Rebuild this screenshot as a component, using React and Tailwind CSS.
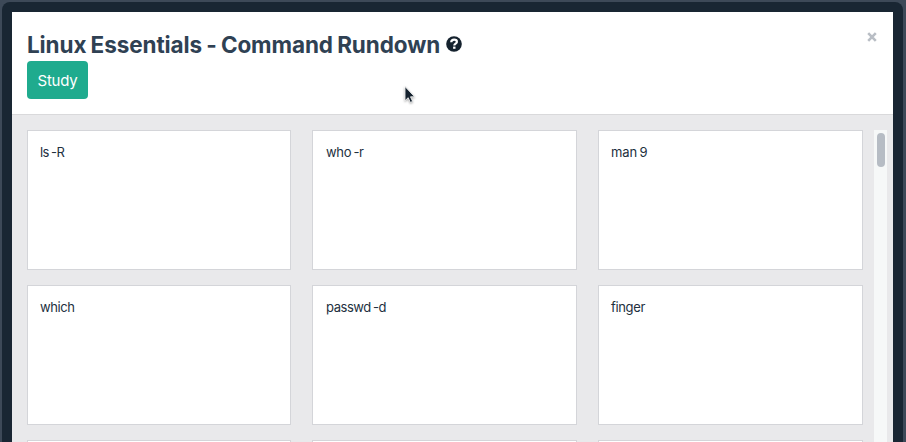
const cards = [
  { text: 'ls -R', look: 'pl-[12px] tracking-[-0.55px]' },
  { text: 'who -r', look: 'pl-[13px] tracking-[-0.35px]' },
  { text: 'man 9', look: 'pl-[12px] tracking-[-0.1px]' },
  { text: 'which', look: 'pl-[12px] tracking-[-0.4px]' },
  { text: 'passwd -d', look: 'pl-[13px] tracking-[-0.45px]' },
  { text: 'finger', look: 'pl-[12px] tracking-[-0.35px]' },
  { text: '', look: '' },
  { text: '', look: '' },
  { text: '', look: '' },
];

function HelpIcon() {
  return (
    <svg className="mt-[24px] h-4 w-4 shrink-0" viewBox="0 0 16 16">
      <circle cx="8" cy="8" r="7.8" fill="#15222e" />
      <path d="M5.2 6.3C5.3 4.6 6.4 3.7 8.1 3.7c1.7 0 2.8.9 2.8 2.2 0 1.7-2.6 1.8-2.6 3.6" fill="none" stroke="#fff" strokeWidth="2.2" />
      <rect x="7.1" y="10.6" width="2.4" height="2.2" fill="#fff" />
    </svg>
  );
}

function Cursor() {
  return (
    <svg className="absolute left-[403px] top-[85px] h-[22px] w-[16px] drop-shadow-[0_1px_1px_rgba(0,0,0,0.35)]" viewBox="0 0 16 22">
      <path d="M2 1.5v14.2l3.2-3 2.1 4.7 2.3-1-2.1-4.6h4.1z" fill="#15222e" stroke="#fff" strokeWidth=".8" />
    </svg>
  );
}

export default function App() {
  return (
    <div className="relative h-[442px] w-[906px] overflow-hidden bg-[#3d4958] px-[2px] pt-[2px] font-['Inter','Liberation_Sans',sans-serif]">
      <div className="h-[460px] w-[901px] rounded-[8px] bg-[#192633] px-[10px] pt-[10px]">
        <div className="flex h-[450px] w-[881px] flex-col bg-[#e9e9eb]">
          <header className="flex h-[103px] shrink-0 justify-between border-b border-[#d9d9db] bg-white pl-[15px] pr-[16px]">
            <div>
              <div className="flex h-[49px]">
                <h1 className="mt-[18px] w-[419px] whitespace-nowrap text-[22.5px] font-bold leading-[30px] tracking-[-0.1px] text-[#2f4153] [word-spacing:-1px]">Linux Essentials - Command Rundown</h1>
                <HelpIcon />
              </div>
              <button className="block h-[38px] w-[61px] rounded-[4px] bg-[#1fab8e] text-[15px] leading-[40px] tracking-[-0.2px] text-white">Study</button>
            </div>
            <button aria-label="Close" className="mt-[20px] h-[10px] w-[10px]">
              <svg className="block h-[10px] w-[10px]" viewBox="0 0 10 10">
                <path d="M1.2 1.2l7.6 7.6M8.8 1.2L1.2 8.8" stroke="#b9bec5" strokeWidth="2.6" />
              </svg>
            </button>
          </header>
          <main className="flex min-h-0 flex-1 justify-between pl-[15px] pr-[6px] pt-[15px]">
            <div className="grid w-[836px] grid-cols-[264px_265px_265px] content-start gap-x-[21px] gap-y-[15px]">
              {cards.map((card, i) => (
                <article key={i} className={`h-[140px] border border-[#d4d5d9] bg-white pt-[11px] text-[13px] leading-[20px] text-[#22303e] [word-spacing:-1px] ${card.look}`}>
                  {card.text}
                </article>
              ))}
            </div>
            <div className="w-[13px] bg-[#f6f8f8] pl-[3px] pt-[3px]">
              <div className="h-[34px] w-[8px] rounded-full bg-[#b6bcc4]" />
            </div>
          </main>
        </div>
      </div>
      <Cursor />
    </div>
  );
}
